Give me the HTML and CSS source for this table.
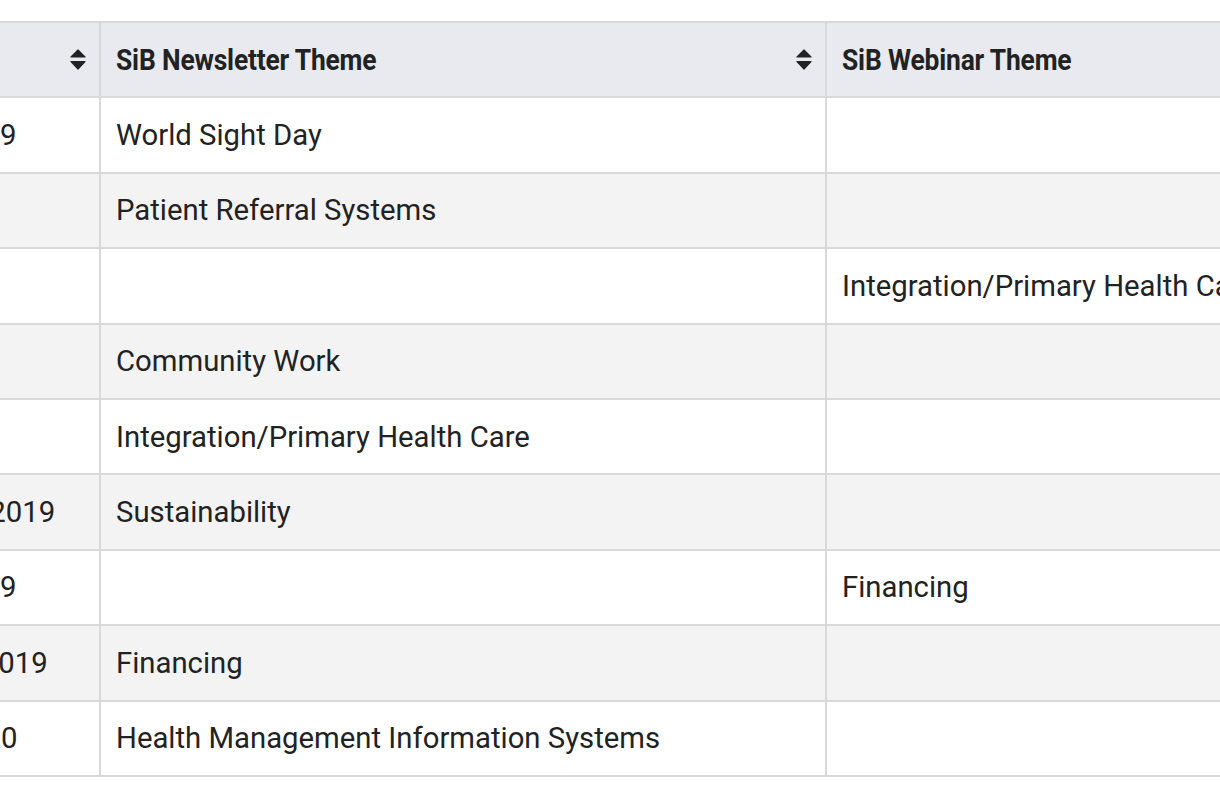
FILE: index.html
```html
<!DOCTYPE html>
<html lang="en">
<head>
<meta charset="utf-8">
<title>SiB Themes</title>
<link rel="stylesheet" href="styles.css">
</head>
<body>
<div class="viewport">
  <table class="themes">
    <colgroup>
      <col class="c-date">
      <col class="c-news">
      <col class="c-web">
    </colgroup>
    <thead>
      <tr>
        <th><div class="th-in"><span class="th-label">Date</span><svg class="sort" viewBox="0 0 16 21" aria-hidden="true"><path d="M8 1 L15 8 H1 Z M1 12.5 H15 L8 20 Z"/></svg></div></th>
        <th><div class="th-in"><span class="th-label">SiB Newsletter Theme</span><svg class="sort" viewBox="0 0 16 21" aria-hidden="true"><path d="M8 1 L15 8 H1 Z M1 12.5 H15 L8 20 Z"/></svg></div></th>
        <th><div class="th-in"><span class="th-label">SiB Webinar Theme</span><svg class="sort" viewBox="0 0 16 21" aria-hidden="true"><path d="M8 1 L15 8 H1 Z M1 12.5 H15 L8 20 Z"/></svg></div></th>
      </tr>
    </thead>
    <tbody>
      <tr><td>October 2019</td><td>World Sight Day</td><td></td></tr>
      <tr><td>July 2019</td><td>Patient Referral Systems</td><td></td></tr>
      <tr><td>June 2019</td><td></td><td>Integration/Primary Health Care</td></tr>
      <tr><td>May 2019</td><td>Community Work</td><td></td></tr>
      <tr><td>April 2019</td><td>Integration/Primary Health Care</td><td></td></tr>
      <tr><td>September 2019</td><td>Sustainability</td><td></td></tr>
      <tr><td>October 2019</td><td></td><td>Financing</td></tr>
      <tr><td>November 2019</td><td>Financing</td><td></td></tr>
      <tr><td>January 2020</td><td>Health Management Information Systems</td><td></td></tr>
    </tbody>
  </table>
</div>
</body>
</html>
```

FILE: styles.css
```css
html, body {
  margin: 0;
  padding: 0;
  background: #ffffff;
}

body {
  font-family: Roboto, "Liberation Sans", Arial, sans-serif;
  color: #222222;
}

.viewport {
  width: 1220px;
  height: 800px;
  overflow: hidden;
  padding-top: 21px;
  box-sizing: border-box;
}

.themes {
  border-collapse: collapse;
  table-layout: fixed;
  width: 1622px;
  margin-left: -177px;
}

.c-date { width: 276px; }
.c-news { width: 726px; }
.c-web { width: 620px; }

.themes th,
.themes td {
  border: 2px solid #d9d9d9;
  height: 73.4px;
  padding: 0 13px 0 15px;
  vertical-align: middle;
  text-align: left;
  white-space: nowrap;
  overflow: hidden;
  font-size: 29.3px;
  line-height: 34px;
}

.themes thead th {
  background: #e8eaf0;
  font-weight: 700;
}

.th-in {
  display: flex;
  align-items: center;
  justify-content: space-between;
}

.th-label {
  display: inline-block;
  transform: scaleX(0.88);
  transform-origin: left center;
  font-size: 30px;
  letter-spacing: -0.2px;
}

.sort {
  width: 16px;
  height: 21px;
  flex: none;
  fill: #222222;
  stroke: #222222;
  stroke-width: 1.2;
  stroke-linejoin: round;
}

.themes tbody tr:nth-child(even) td {
  background: #f3f3f3;
}

.themes tbody tr:nth-child(odd) td {
  background: #ffffff;
}
```
